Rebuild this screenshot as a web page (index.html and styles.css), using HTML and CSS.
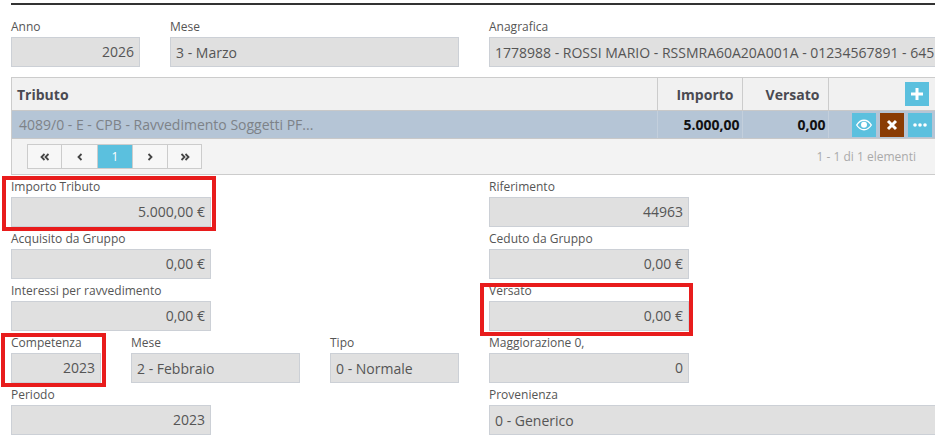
FILE: index.html
```html
<!DOCTYPE html>
<html lang="it">
<head>
<meta charset="utf-8">
<title>Tributo</title>
<link rel="stylesheet" href="styles.css">
</head>
<body>
<main class="page">
  <section class="row top-row">
    <div class="field w129"><span class="label">Anno</span><div class="box num">2026</div></div>
    <div class="field w289"><span class="label">Mese</span><div class="box">3 - Marzo</div></div>
    <div class="field grow"><span class="label">Anagrafica</span><div class="box">1778988 - ROSSI MARIO - RSSMRA60A20A001A - 01234567891 - 645</div></div>
  </section>

  <section class="grid-wrap">
    <table class="grid">
      <colgroup><col><col class="c-imp"><col class="c-ver"><col class="c-act"></colgroup>
      <thead>
        <tr>
          <th class="th-left">Tributo</th>
          <th class="th-right">Importo</th>
          <th class="th-right">Versato</th>
          <th class="th-act"><button class="btn blue plus-btn" type="button" aria-label="Aggiungi"><svg viewBox="0 0 14 14" width="14" height="14"><path d="M7 1v12M1 7h12" stroke="#fff" stroke-width="3" fill="none"/></svg></button></th>
        </tr>
      </thead>
      <tbody>
        <tr>
          <td class="td-name">4089/0 - E - CPB - Ravvedimento Soggetti PF...</td>
          <td class="td-num">5.000,00</td>
          <td class="td-num">0,00</td>
          <td class="td-act">
            <div class="actions">
              <button class="btn blue" type="button" aria-label="Vedi"><svg viewBox="0 0 16 12" width="16" height="12"><path d="M.7 6C2.600 2.900 5 1.200 8 1.200s5.400 1.700 7.300 4.800C13.400 9.100 11 10.800 8 10.800S2.600 9.100.7 6z" fill="none" stroke="#fff" stroke-width="1.400"/><circle cx="8" cy="5.800" r="3" fill="#fff"/></svg></button>
              <button class="btn brown" type="button" aria-label="Elimina"><svg viewBox="0 0 12 12" width="12" height="12"><path d="M2 2l8 8M10 2l-8 8" stroke="#fff" stroke-width="3" fill="none"/></svg></button>
              <button class="btn blue" type="button" aria-label="Altro"><svg viewBox="0 0 14 4" width="14" height="4"><circle cx="2" cy="2" r="1.800" fill="#fff"/><circle cx="7" cy="2" r="1.800" fill="#fff"/><circle cx="12" cy="2" r="1.800" fill="#fff"/></svg></button>
            </div>
          </td>
        </tr>
      </tbody>
    </table>
    <div class="pager-bar">
      <nav class="pager">
        <a class="pg"><svg viewBox="0 0 10 8" width="10" height="8"><path d="M4.500 1L1.500 4l3 3M8.500 1l-3 3 3 3" fill="none" stroke="#444" stroke-width="1.800"/></svg></a>
        <a class="pg"><svg viewBox="0 0 6 8" width="6" height="8"><path d="M4.500 1L1.500 4l3 3" fill="none" stroke="#444" stroke-width="1.800"/></svg></a>
        <a class="pg active">1</a>
        <a class="pg"><svg viewBox="0 0 6 8" width="6" height="8"><path d="M1.500 1l3 3-3 3" fill="none" stroke="#444" stroke-width="1.800"/></svg></a>
        <a class="pg"><svg viewBox="0 0 10 8" width="10" height="8"><path d="M1.500 1l3 3-3 3M5.500 1l3 3-3 3" fill="none" stroke="#444" stroke-width="1.800"/></svg></a>
      </nav>
      <span class="pager-info">1 - 1 di 1 elementi</span>
    </div>
  </section>

  <section class="form">
    <div class="cell"><div class="field w200 mark mark-imp"><span class="label">Importo Tributo</span><div class="box num">5.000,00 €</div></div></div>
    <div class="cell"><div class="field w200"><span class="label">Riferimento</span><div class="box num">44963</div></div></div>

    <div class="cell"><div class="field w200"><span class="label">Acquisito da Gruppo</span><div class="box num">0,00 €</div></div></div>
    <div class="cell"><div class="field w200"><span class="label">Ceduto da Gruppo</span><div class="box num">0,00 €</div></div></div>

    <div class="cell"><div class="field w200"><span class="label">Interessi per ravvedimento</span><div class="box num">0,00 €</div></div></div>
    <div class="cell"><div class="field w200 mark mark-ver"><span class="label">Versato</span><div class="box num">0,00 €</div></div></div>

    <div class="cell row">
      <div class="field w90 mark mark-com"><span class="label">Competenza</span><div class="box num">2023</div></div>
      <div class="field w169"><span class="label">Mese</span><div class="box">2 - Febbraio</div></div>
      <div class="field w129"><span class="label">Tipo</span><div class="box">0 - Normale</div></div>
    </div>
    <div class="cell"><div class="field w200"><span class="label">Maggiorazione 0,</span><div class="box num">0</div></div></div>

    <div class="cell"><div class="field w200"><span class="label">Periodo</span><div class="box num">2023</div></div></div>
    <div class="cell"><div class="field"><span class="label">Provenienza</span><div class="box">0 - Generico</div></div></div>
  </section>
</main>
</body>
</html>
```

FILE: styles.css
```css
html, body {
  margin: 0;
  padding: 0;
  background: #fff;
  overflow: hidden;
}
body {
  width: 935px;
  height: 437px;
  font-family: "Open Sans", "Liberation Sans", sans-serif;
  color: #555;
}
.page {
  width: 925px;
  margin: 3px 0 0 11px;
  padding-top: 17px;
  border-top: 2px solid #333;
}
.row {
  display: flex;
  gap: 30px;
}
.field {
  position: relative;
  display: flex;
  flex-direction: column;
}
.grow { flex: 1; min-width: 0; }
.w90 { width: 90px; }
.w129 { width: 129px; }
.w169 { width: 169px; }
.w200 { width: 200px; }
.w289 { width: 289px; }
.label {
  display: block;
  margin-bottom: 6px;
  font-size: 12px;
  line-height: 9px;
  color: #555;
}
.box {
  box-sizing: border-box;
  height: 30px;
  padding: 0 5px;
  background: #e0e0e0;
  border: 1px solid #ccd0d6;
  font-size: 14px;
  line-height: 30px;
  color: #555;
  white-space: nowrap;
  overflow: hidden;
}
.num { text-align: right; line-height: 27px; }

.grid-wrap {
  margin-top: 10px;
  border: 1px solid #ccc;
  background: #f3f3f3;
}
.grid {
  width: 100%;
  table-layout: fixed;
  border-collapse: collapse;
}
.c-imp { width: 85px; }
.c-ver { width: 86px; }
.c-act { width: 107px; }
.grid th {
  height: 32px;
  padding: 0 5px;
  background: #f1f1f1;
  font-size: 14px;
  font-weight: 700;
  color: #4a4a52;
  border-bottom: 1px solid #c8c8c8;
}
.th-left { text-align: left; }
.grid .th-right { text-align: right; padding-right: 8px; border-left: 1px solid #ccc; }
.grid .th-act { border-left: 1px solid #ccc; text-align: left; padding: 0 0 0 76px; }
.grid td {
  height: 27px;
  padding: 0 5px;
  background: #b5c5d6;
  font-size: 14px;
  border-bottom: 1px solid #c8c8c8;
}
.grid .td-name { color: #7d8288; padding-left: 7px; }
.grid .td-num { text-align: right; font-weight: 700; color: #111; border-left: 1px solid #c3cfdc; padding-right: 2px; }
.grid .td-act { padding: 0 0 0 23px; border-left: 1px solid #c3cfdc; }
.actions { display: flex; gap: 4px; }
.btn {
  display: flex;
  align-items: center;
  justify-content: center;
  width: 24px;
  height: 24px;
  padding: 0;
  border: 0;
}
.blue { background: #5bc0de; }
.brown { background: #8a3c04; }
.pager-bar {
  display: flex;
  align-items: center;
  justify-content: space-between;
  height: 35px;
  padding: 0 19px 0 15px;
}
.pager { display: flex; height: 25px; border: 1px solid #ccc; box-sizing: border-box; background: #f7f7f7; }
.pg {
  display: flex;
  align-items: center;
  justify-content: center;
  box-sizing: border-box;
  width: 35px;
  font-size: 12px;
  border-left: 1px solid #ccc;
}
.pg:first-child { border-left: 0; width: 33px; }
.pg:nth-child(2) { width: 36px; }
.pg:last-child { width: 34px; }
.active { background: #5bc0de; color: #fff; }
.pager-info { font-size: 12px; color: #aaa; }

.form {
  display: grid;
  grid-template-columns: 448px 1fr;
  column-gap: 30px;
  row-gap: 7px;
  margin-top: 7px;
}
.mark::after {
  content: "";
  position: absolute;
  border: 4px solid #e81c1c;
  pointer-events: none;
}
.mark-imp::after { left: -9px; top: -6px; width: 206px; height: 47px; }
.mark-ver::after { left: -9px; top: -3px; width: 205px; height: 45px; }
.mark-com::after { left: -10px; top: -5px; width: 97px; height: 46px; }
```
